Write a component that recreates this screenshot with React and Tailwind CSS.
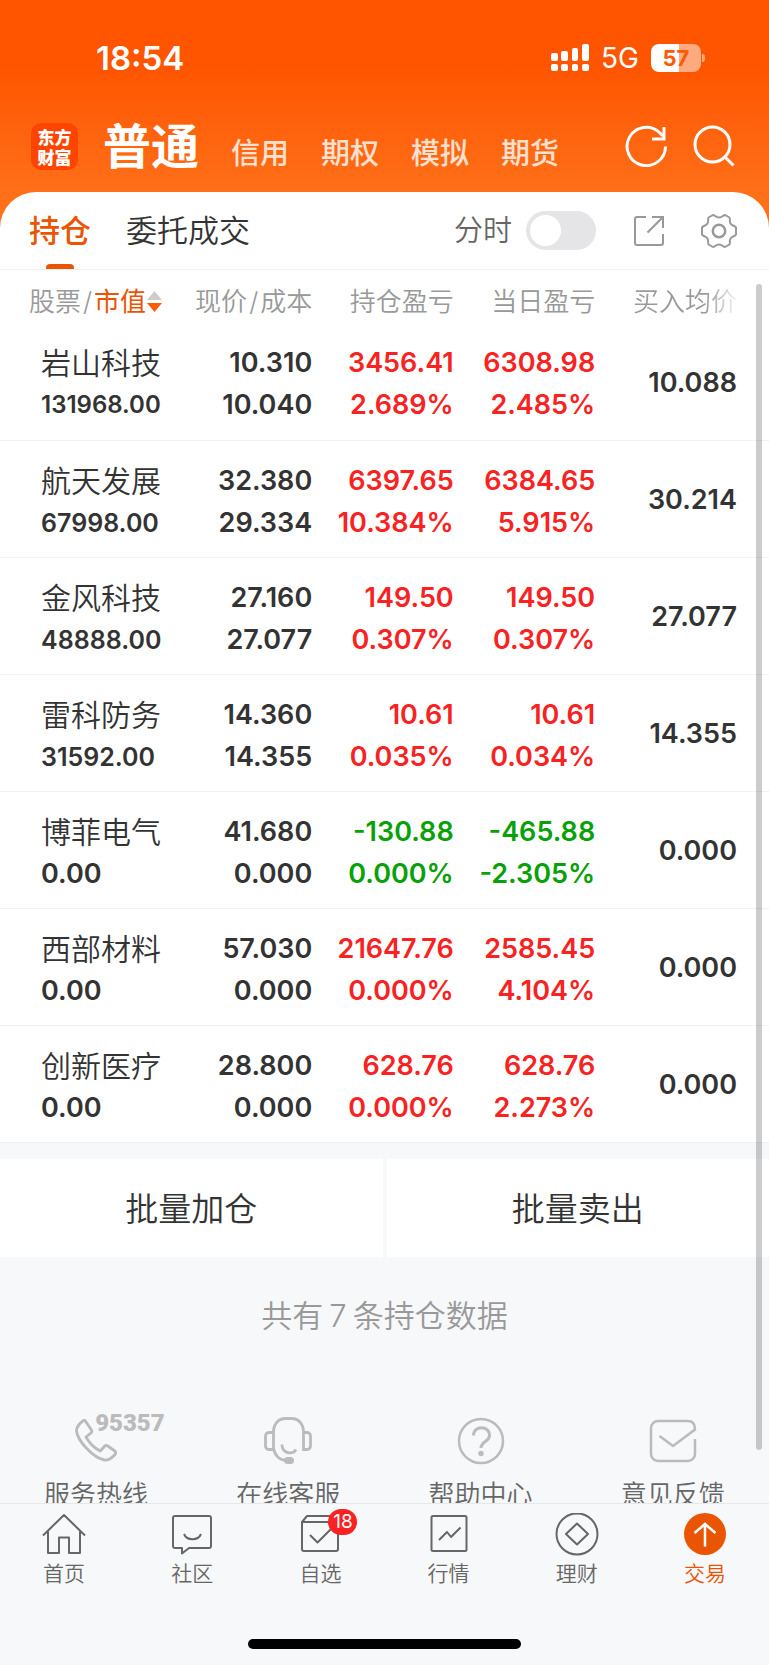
import React, { useState } from 'react';

const holdings = [
    { name: '岩山科技', value: '131968.00', price: '10.310', cost: '10.040', profit: '3456.41', profitRate: '2.689%', today: '6308.98', todayRate: '2.485%', avg: '10.088' },
    { name: '航天发展', value: '67998.00', price: '32.380', cost: '29.334', profit: '6397.65', profitRate: '10.384%', today: '6384.65', todayRate: '5.915%', avg: '30.214' },
    { name: '金风科技', value: '48888.00', price: '27.160', cost: '27.077', profit: '149.50', profitRate: '0.307%', today: '149.50', todayRate: '0.307%', avg: '27.077' },
    { name: '雷科防务', value: '31592.00', price: '14.360', cost: '14.355', profit: '10.61', profitRate: '0.035%', today: '10.61', todayRate: '0.034%', avg: '14.355' },
    { name: '博菲电气', value: '0.00', price: '41.680', cost: '0.000', profit: '-130.88', profitRate: '0.000%', today: '-465.88', todayRate: '-2.305%', avg: '0.000' },
    { name: '西部材料', value: '0.00', price: '57.030', cost: '0.000', profit: '21647.76', profitRate: '0.000%', today: '2585.45', todayRate: '4.104%', avg: '0.000' },
    { name: '创新医疗', value: '0.00', price: '28.800', cost: '0.000', profit: '628.76', profitRate: '0.000%', today: '628.76', todayRate: '2.273%', avg: '0.000' },
];

const accounts = ['信用', '期权', '模拟', '期货'];

const getProfitColor = (value) => (value.startsWith('-') ? 'text-[#0aa00a]' : 'text-[#f82222]');

// long amounts shrink so they stay inside the first column
const getValueSize = (value) => {
    if (value.length > 8) return 'text-[24px]';
    if (value.length > 6) return 'text-[25px]';
    return 'text-[27px]';
};

const SignalIcon = () => (
    <svg width="38" height="28" viewBox="0 0 38 28" fill="#fff">
        <rect x="0" y="9" width="7" height="8" rx="2" />
        <rect x="10" y="7" width="7" height="10" rx="2" />
        <rect x="21" y="4" width="6" height="13" rx="2" />
        <rect x="31" y="0" width="7" height="17" rx="2" />
        <rect x="0" y="20" width="7" height="7" rx="2" />
        <rect x="10" y="20" width="7" height="7" rx="2" />
        <rect x="21" y="20" width="6" height="7" rx="2" />
        <rect x="31" y="20" width="7" height="7" rx="2" />
    </svg>
);

const RefreshIcon = () => (
    <svg width="42" height="42" viewBox="0 0 42 42" fill="none" stroke="#fff" strokeWidth="3">
        <path d="M40.500 21.500A19.200 19.200 0 1 1 34.500 7.500L38 11" />
        <path d="M39 2v12H27" />
    </svg>
);

const SearchIcon = () => (
    <svg width="42" height="42" viewBox="0 0 42 42" fill="none" stroke="#fff" strokeWidth="3">
        <circle cx="19.500" cy="19.500" r="17.500" />
        <path d="M31.500 31.500l9 9" />
    </svg>
);

const ExportIcon = () => (
    <svg width="30" height="30" viewBox="0 0 30 30" fill="none" stroke="#999" strokeWidth="2">
        <path d="M12 1H3a2 2 0 0 0-2 2v24a2 2 0 0 0 2 2h24a2 2 0 0 0 2-2v-9" />
        <path d="M18 1h11v11M28.500 1.500L13.500 16.500" />
    </svg>
);

const GearIcon = () => (
    <svg width="36" height="36" viewBox="0 0 36 36" fill="none" stroke="#999" strokeWidth="2" strokeLinejoin="round">
        <path d="M12 2c2 0 2.500 2.500 6 2.500S22 2 24 2l4.500 2.500c1 1.500-.5 3.500 1 6s4.500 2 5.500 4v7c-1 2-4 1.500-5.500 4s0 4.500-1 6L24 34c-2 0-2.500-2.500-6-2.500S14 34 12 34l-4.500-2.500c-1-1.500.5-3.500-1-6S2 23.500 1 21.500v-7c1-2 4-1.500 5.500-4s0-4.500 1-6z" />
        <circle cx="18" cy="18" r="6.200" strokeWidth="2.500" />
    </svg>
);

const PhoneIcon = () => (
    <svg width="42" height="43" viewBox="0 0 42 43" fill="none" stroke="#bbb" strokeWidth="2.800" strokeLinejoin="round">
        <path d="M8.500 1.500C5 4 1.500 8 1.500 12c1 10 17 27 28 29 4 .5 8-2.500 11-6 .5-1 .3-2-.7-3l-7-5c-1-.7-2-.7-3 0l-4.500 5C20 29.500 14 23.500 11 18l5-4c1-1 1-2 .4-3l-6-9c-.5-.8-1.200-1-1.900-.5z" />
    </svg>
);

const HeadsetIcon = () => (
    <svg width="48" height="47" viewBox="0 0 48 47" fill="none" stroke="#bbb" strokeWidth="2.800">
        <path d="M9.500 15.500H5A3.500 3.500 0 0 0 1.500 19v10A3.500 3.500 0 0 0 5 32.500h4.500V15c0-8 5-13.500 12-13.500h6c7 0 12 5.500 12 13.500v17.500H43a3.500 3.500 0 0 0 3.500-3.500V19a3.500 3.500 0 0 0-3.500-3.500h-3.500" />
        <path d="M9.500 31c1 7 6 12.500 12.500 12.500" />
        <path d="M18 27.500c0 9 11 11 14 5" />
        <rect x="20" y="40" width="10" height="7" rx="3.500" fill="#bbb" stroke="none" />
    </svg>
);

const QuestionIcon = () => (
    <svg width="48" height="48" viewBox="0 0 48 48" fill="none" stroke="#bbb" strokeWidth="3">
        <circle cx="24" cy="24" r="22" strokeWidth="2.500" />
        <path d="M16.500 18.500c0-10.500 16-10.500 16 0 0 6-8.500 6-8.500 12.500" />
        <circle cx="24" cy="36.500" r="2.700" fill="#bbb" stroke="none" />
    </svg>
);

const MailIcon = () => (
    <svg width="48" height="44" viewBox="0 0 48 44" fill="none" stroke="#bbb" strokeWidth="2.500">
        <path d="M46 20v15a7 7 0 0 1-7 7H9a7 7 0 0 1-7-7V9a7 7 0 0 1 7-7h30c5 0 7 3.500 7 8.500L24 27 10.500 17" />
    </svg>
);

const HomeIcon = () => (
    <svg width="44" height="44" viewBox="0 0 44 44" fill="none" stroke="#666" strokeWidth="2" strokeLinejoin="round">
        <path d="M1 22.500L22 2l21 20.500M6 18.500V40h11V24.500h10V40h11V18.500" />
    </svg>
);

const CommunityIcon = () => (
    <svg width="44" height="44" viewBox="0 0 44 44" fill="none" stroke="#666" strokeWidth="2" strokeLinejoin="round">
        <path d="M5 3h34q2 0 2 2v28q0 2-2 2H19l-7 5.500V35H5q-2 0-2-2V5q0-2 2-2z" />
        <path d="M14 21c3 7 14 7 17 0" />
    </svg>
);

const WatchlistIcon = () => (
    <svg width="44" height="44" viewBox="0 0 44 44" fill="none" stroke="#666" strokeWidth="2" strokeLinejoin="round">
        <path d="M4 9v27q0 2 2 2h32q2 0 2-2V9M4 9h36l-5-6H9z" />
        <path d="M12 22l7.500 7.500L34 15" />
    </svg>
);

const MarketIcon = () => (
    <svg width="44" height="44" viewBox="0 0 44 44" fill="none" stroke="#666" strokeWidth="2" strokeLinejoin="round">
        <rect x="4.500" y="3" width="35" height="35" rx="1.500" />
        <path d="M12 27l8-8 4 5 9.500-9.500" />
    </svg>
);

const WealthIcon = () => (
    <svg width="44" height="44" viewBox="0 0 44 44" fill="none" stroke="#666" strokeWidth="2" strokeLinejoin="round">
        <circle cx="22" cy="21" r="20.500" />
        <path d="M22 10.500l11 10.500-11 10.500L11 21z" />
    </svg>
);

const TradeIcon = () => (
    <svg width="44" height="44" viewBox="0 0 44 44" fill="none" stroke="#fff" strokeWidth="2.500">
        <circle cx="22" cy="21" r="21" fill="#ea5504" stroke="none" />
        <path d="M22 33.500V11M11.500 20L22 11l10.500 9" />
    </svg>
);

const services = [
    { label: '服务热线', icon: <PhoneIcon />, phone: '95357' },
    { label: '在线客服', icon: <HeadsetIcon /> },
    { label: '帮助中心', icon: <QuestionIcon /> },
    { label: '意见反馈', icon: <MailIcon /> },
];

const navItems = [
    { label: '首页', icon: <HomeIcon /> },
    { label: '社区', icon: <CommunityIcon /> },
    { label: '自选', icon: <WatchlistIcon />, badge: 18 },
    { label: '行情', icon: <MarketIcon /> },
    { label: '理财', icon: <WealthIcon /> },
    { label: '交易', icon: <TradeIcon />, active: true },
];

const StatusBar = () => (
    <div className="flex h-[116px] items-center justify-between pr-16 pl-24 text-white">
        <span className="text-[33px] leading-10 font-semibold">18:54</span>
        <div className="flex items-center gap-3">
            <SignalIcon />
            <span className="text-[28px] leading-8">5G</span>
            <div className="flex items-center gap-px">
                <div className="flex h-7 w-[50px] items-center justify-center rounded-lg bg-linear-to-r from-white from-57% to-white/50 to-57% text-[22px] font-bold text-[#ff5a05]">57</div>
                <div className="h-2 w-[3px] rounded-r-full bg-white/50"></div>
            </div>
        </div>
    </div>
);

const AccountHeader = () => (
    <div className="flex h-[76px] items-start justify-between pr-[34px] pl-[31px] text-white">
        <div className="flex">
            <div className="mt-[7px] flex h-[47px] w-[47px] flex-col items-center rounded-[10px] bg-[#ff4400] pt-1 font-['Noto_Sans_CJK_SC',sans-serif] text-[17px] leading-5 font-black">
                <span>东方</span>
                <span>财富</span>
            </div>
            <nav className="ml-[25px] flex items-start gap-8">
                <a href="#normal" className="text-5xl leading-[62px] font-bold">普通</a>
                {accounts.map(item => (
                    <a key={item} href="#account" className="pt-[18px] text-[29px] leading-10 font-medium text-white/80">{item}</a>
                ))}
            </nav>
        </div>
        <div className="mt-[9px] flex gap-[26px]">
            <button aria-label="刷新"><RefreshIcon /></button>
            <button aria-label="搜索"><SearchIcon /></button>
        </div>
    </div>
);

const HoldingsTable = () => (
    <table className="w-full table-fixed text-right">
        <colgroup>
            <col className="w-[22%]" />
            <col className="w-[18.6%]" />
            <col className="w-[18.4%]" />
            <col className="w-[18.4%]" />
            <col />
        </colgroup>
        <thead>
            <tr className="h-[53px] text-[26px] leading-8 whitespace-nowrap text-[#999]">
                <th className="pt-[10px] pl-[29px] text-left font-[350]">
                    <button className="flex items-center">
                        股票<span className="mx-[2px]">/</span><span className="font-normal text-[#ea5504]">市值</span>
                        <svg className="ml-px" width="15" height="21" viewBox="0 0 15 21">
                            <path d="M7.500 0L15 9H0z" fill="#ccc" />
                            <path d="M0 12h15l-7.500 9z" fill="#ff5a0a" />
                        </svg>
                    </button>
                </th>
                <th className="pt-[10px] font-[350]">现价<span className="mx-[2px]">/</span>成本</th>
                <th className="pt-[10px] font-[350]">持仓盈亏</th>
                <th className="pt-[10px] font-[350]">当日盈亏</th>
                <th className="pt-[10px] pr-8 font-[350]">
                    <span className="bg-linear-to-r from-[#999] from-70% to-[#999]/10 bg-clip-text text-transparent">买入均价</span>
                </th>
            </tr>
        </thead>
        <tbody>
            {holdings.map(item => (
                <tr key={item.name} className="h-[117px] border-b border-[#f2f2f2] text-[27px] leading-[42px] font-semibold text-[#333]">
                    <td className="pt-[6px] pl-[41px] text-left whitespace-nowrap">
                        <div className="text-[30px] font-[350]">{item.name}</div>
                        <div className={getValueSize(item.value)}>{item.value}</div>
                    </td>
                    <td className="pt-[6px]">
                        <div>{item.price}</div>
                        <div>{item.cost}</div>
                    </td>
                    <td className={`pt-[6px] ${getProfitColor(item.profit)}`}>
                        <div>{item.profit}</div>
                        <div>{item.profitRate}</div>
                    </td>
                    <td className={`pt-[6px] ${getProfitColor(item.today)}`}>
                        <div>{item.today}</div>
                        <div>{item.todayRate}</div>
                    </td>
                    <td className="pt-[3px] pr-8">{item.avg}</td>
                </tr>
            ))}
        </tbody>
    </table>
);

const App = () => {
    const [timeShare, setTimeShare] = useState(false);

    return (
        <div className="relative flex h-screen flex-col bg-[#f7f8fa] font-['Inter','Noto_Sans_CJK_SC',sans-serif]">
            <header className="-mb-10 shrink-0 bg-linear-to-b from-[#ff5500] from-30% to-[#ff7018] to-85% pb-10">
                <StatusBar />
                <AccountHeader />
            </header>

            <main className="min-h-0 flex-1 overflow-hidden rounded-t-[36px]">
                <div className="flex h-[78px] items-center justify-between border-b border-[#f0f0f0] bg-white pr-8 pl-[29px]">
                    <div className="flex h-full gap-[35px] text-[31px] leading-[78px] text-[#333]">
                        <button className="relative font-medium text-[#ea5504]">
                            持仓
                            <span className="absolute bottom-0 left-1/2 h-[5px] w-7 -translate-x-1/2 rounded-t-sm bg-[#ea5504]"></span>
                        </button>
                        <button className="font-[350]">委托成交</button>
                    </div>
                    <div className="flex items-center">
                        <label className="flex items-center gap-[14px] text-[29px] font-[350] text-[#666]">
                            分时
                            <input
                                type="checkbox"
                                checked={timeShare}
                                onChange={(e) => setTimeShare(e.target.checked)}
                                className="h-[39px] w-[70px] appearance-none rounded-full bg-[#e5e5e7] p-1 before:block before:h-[31px] before:w-[31px] before:rounded-full before:bg-white checked:bg-[#ea5504] checked:before:ml-auto"
                            />
                        </label>
                        <button className="ml-[38px]" aria-label="分享"><ExportIcon /></button>
                        <button className="ml-[37px]" aria-label="设置"><GearIcon /></button>
                    </div>
                </div>

                <div className="bg-white">
                    <HoldingsTable />
                </div>

                <div className="mt-4 grid grid-cols-2 gap-1 text-[33px] font-[350] text-[#333]">
                    <button className="h-[98px] bg-white pt-1">批量加仓</button>
                    <button className="h-[98px] bg-white pt-1">批量卖出</button>
                </div>

                <p className="pt-9 text-center text-[31px] leading-[46px] font-[350] text-[#999]">
                    共有<span className="mx-[6px]">{holdings.length}</span>条持仓数据
                </p>

                <div className="mt-[76px] grid grid-cols-4">
                    {services.map(item => (
                        <a key={item.label} href="#service" className="flex flex-col items-center">
                            <span className="relative flex h-[52px] items-center justify-center">
                                {item.icon}
                                {item.phone && <span className="absolute -top-1 left-5 font-['Roboto',sans-serif] text-2xl leading-6 font-black text-[#bbb]">{item.phone}</span>}
                            </span>
                            <span className="mt-3 text-[26px] leading-8 font-[350] text-[#666]">{item.label}</span>
                        </a>
                    ))}
                </div>
            </main>

            <nav className="z-10 shrink-0 border-t border-[#e8e8ea] bg-[#f7f8fa]">
                <div className="grid grid-cols-6 pt-[9px]">
                    {navItems.map(item => (
                        <a key={item.label} href="#nav" className="flex flex-col items-center">
                            <span className="relative">
                                {item.icon}
                                {item.badge && <span className="absolute -top-1 left-[30px] flex h-[26px] w-[29px] items-center justify-center rounded-full bg-[#f82222] text-[19px] text-white">{item.badge}</span>}
                            </span>
                            <span className={`mt-px text-[21px] leading-8 font-[350] ${item.active ? 'text-[#ea5504]' : 'text-[#666]'}`}>{item.label}</span>
                        </a>
                    ))}
                </div>
                <div className="mx-auto mt-[49px] mb-4 h-[10px] w-[273px] rounded-full bg-black"></div>
            </nav>

            <div className="absolute top-[284px] right-[7px] bottom-[215px] w-[6px] rounded-full bg-black/20"></div>
        </div>
    );
};

export default App;
